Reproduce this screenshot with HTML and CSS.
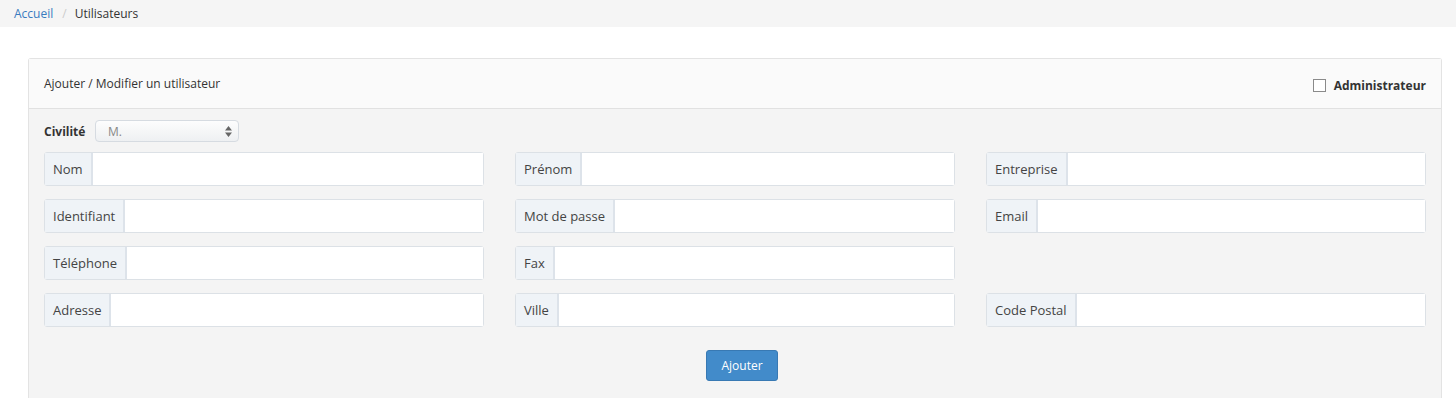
FILE: index.html
```html
<!DOCTYPE html>
<html lang="fr">
<head>
  <meta charset="UTF-8">
  <title>Utilisateurs</title>
  <link rel="stylesheet" href="styles.css">
</head>
<body>
  <!-- Fil d'Ariane -->
  <ol class="breadcrumb">
    <li><a href="#">Accueil</a></li>
    <li class="active">Utilisateurs</li>
  </ol>

  <div class="panel">
    <div class="panel-heading">
      <span>Ajouter / Modifier un utilisateur</span>
      <label class="admin"><input type="checkbox"> Administrateur</label>
    </div>
    <div class="panel-body">
      <div class="civilite">
        <label>Civilité</label>
        <div class="select">
          <span>M.</span>
          <svg width="7" height="11" viewBox="0 0 7 11"><path d="M3.5 0 L7 4.5 H0 Z M3.5 11 L7 6.5 H0 Z" fill="#666"/></svg>
        </div>
      </div>

      <div class="fields">
        <div class="input-group"><span class="addon">Nom</span><input type="text"></div>
        <div class="input-group"><span class="addon">Prénom</span><input type="text"></div>
        <div class="input-group"><span class="addon">Entreprise</span><input type="text"></div>

        <div class="input-group"><span class="addon">Identifiant</span><input type="text"></div>
        <div class="input-group"><span class="addon">Mot de passe</span><input type="text"></div>
        <div class="input-group"><span class="addon">Email</span><input type="text"></div>

        <div class="input-group"><span class="addon">Téléphone</span><input type="text"></div>
        <div class="input-group"><span class="addon">Fax</span><input type="text"></div>
        <div></div>

        <div class="input-group"><span class="addon">Adresse</span><input type="text"></div>
        <div class="input-group"><span class="addon">Ville</span><input type="text"></div>
        <div class="input-group"><span class="addon">Code Postal</span><input type="text"></div>
      </div>

      <div class="actions">
        <button class="btn">Ajouter</button>
      </div>
    </div>
  </div>
</body>
</html>
```

FILE: styles.css
```css
* {
  box-sizing: border-box;
}
body {
  margin: 0;
  font-family: 'Open Sans', sans-serif;
  font-size: 13px;
  color: #333;
  background: #fff;
}

/* Fil d'Ariane */
.breadcrumb {
  margin: 0;
  padding: 0 14px;
  height: 27px;
  display: flex;
  align-items: center;
  list-style: none;
  background: #f5f5f5;
  font-size: 12px;
}
.breadcrumb a {
  color: #3a7bbf;
  text-decoration: none;
}
.breadcrumb li + li::before {
  content: "/";
  color: #ccc;
  padding: 0 8px 0 9px;
}
.breadcrumb .active {
  color: #333;
}

/* Panneau */
.panel {
  margin: 31px 14px 0 28px;
  border: 1px solid #e3e3e3;
  border-bottom: none;
  border-radius: 3px 3px 0 0;
  background: #f4f4f4;
}
.panel-heading {
  height: 50px;
  display: flex;
  align-items: center;
  justify-content: space-between;
  padding: 0 15px 0 15px;
  background: #fafafa;
  border-bottom: 1px solid #e1e1e1;
  font-size: 12px;
}
.admin {
  display: flex;
  align-items: center;
  font-weight: bold;
  color: #333;
  font-size: 12px;
  margin-top: 3px;
}
.admin input {
  appearance: none;
  margin: 0 8px 0 0;
  width: 13px;
  height: 13px;
  border: 1px solid #8a8a8a;
  border-radius: 0;
  background: #fff;
}

.panel-body {
  padding: 11px 15px 17px 15px;
}

.civilite {
  display: flex;
  align-items: center;
  height: 22px;
  margin-bottom: 10px;
}
.civilite label {
  font-weight: bold;
  font-size: 12px;
  width: 51px;
}
.select {
  width: 144px;
  height: 22px;
  display: flex;
  align-items: center;
  justify-content: space-between;
  padding: 0 6px 0 12px;
  border: 1px solid #d6dbe1;
  border-radius: 4px;
  background: linear-gradient(#fdfdfd, #eef0f2);
  color: #888;
  font-size: 12px;
}

/* Champs */
.fields {
  display: grid;
  grid-template-columns: 1fr 1fr 1fr;
  column-gap: 31px;
  row-gap: 13px;
}
.input-group {
  display: flex;
  height: 34px;
  border: 1px solid #dce1e6;
  border-radius: 3px;
  background: #fff;
}
.addon {
  display: flex;
  align-items: center;
  padding: 0 8px 0 8px;
  background: #eff3f7;
  border-right: 2px solid #dde3ea;
  color: #444;
  white-space: nowrap;
}
.input-group input {
  flex: 1;
  min-width: 0;
  border: none;
  outline: none;
  background: #fff;
  font: inherit;
}

.actions {
  display: flex;
  justify-content: center;
  padding-left: 14px;
  margin-top: 23px;
}
.btn {
  height: 31px;
  padding: 0 14px;
  border: 1px solid #3879b3;
  border-radius: 3px;
  background: #428bca;
  color: #fff;
  font-family: 'Open Sans', sans-serif;
  font-size: 12px;
}
```
